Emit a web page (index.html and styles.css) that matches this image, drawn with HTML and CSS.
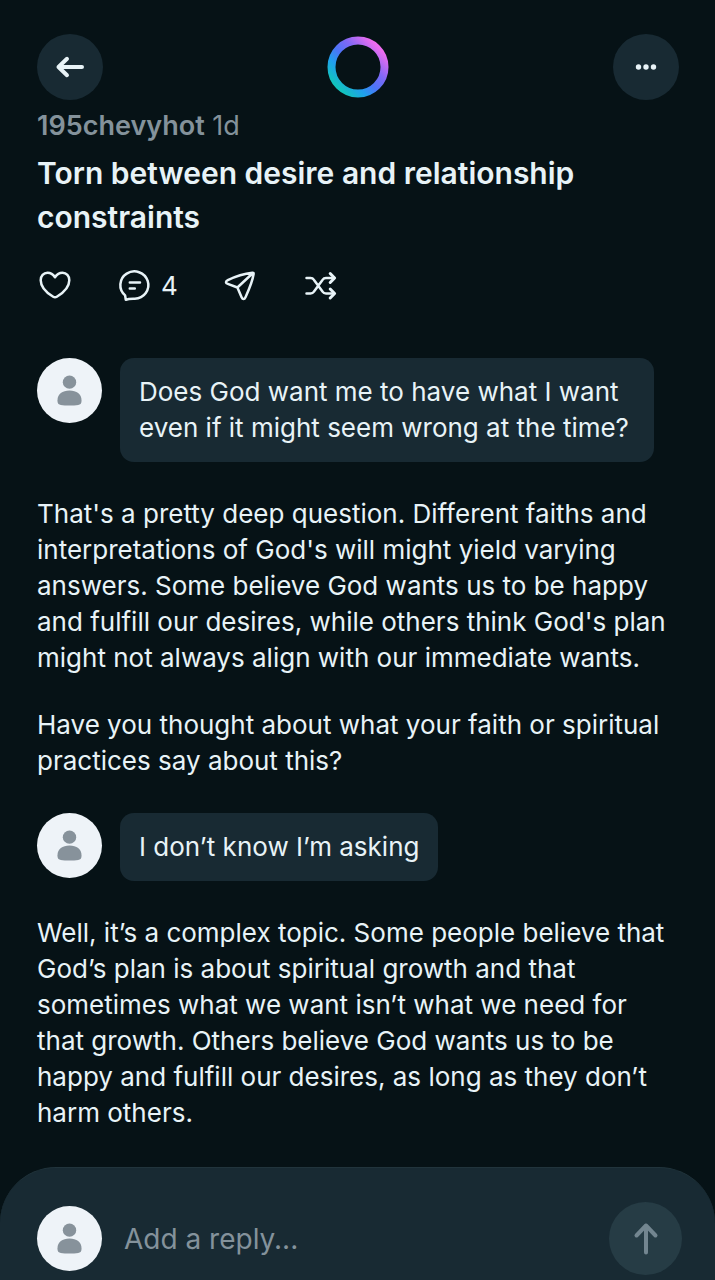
FILE: index.html
```html
<!DOCTYPE html>
<html lang="en">
  <head>
    <meta charset="UTF-8" />
    <meta name="viewport" content="width=device-width, initial-scale=1.0" />
    <title>Torn between desire and relationship constraints</title>
    <link rel="stylesheet" href="styles.css">
  </head>
  <body>
    <!-- Shared avatar picture -->
    <svg class="defs" aria-hidden="true">
      <symbol id="person" viewBox="0 0 66 66">
        <circle cx="33" cy="24.5" r="6.8" />
        <path d="M20.8 43c0-6.5 5-10 12.200-10s12.200 3.500 12.200 10c0 3.500-.8 4.200-3.200 4.600-5.200.8-12.800.8-18 0-2.400-.4-3.200-1.100-3.200-4.600z" />
      </symbol>
    </svg>

    <header class="topbar">
      <button class="round-button" aria-label="Back">
        <svg class="icon" width="32" height="32" viewBox="0 0 32 32">
          <path class="bold" d="M28 16H4.500M13 7.800L4.500 16l8.500 8.200" />
        </svg>
      </button>
      <svg class="logo" width="64" height="64" viewBox="0 0 64 64">
        <defs>
          <linearGradient id="ring" x1="0.12" y1="0.88" x2="0.88" y2="0.12">
            <stop offset="0" stop-color="#12c3bd" />
            <stop offset="0.25" stop-color="#209fee" />
            <stop offset="0.45" stop-color="#4b75f7" />
            <stop offset="0.68" stop-color="#8068f5" />
            <stop offset="1" stop-color="#ee6cf0" />
          </linearGradient>
        </defs>
        <circle cx="32" cy="32" r="26.500" fill="none" stroke="url(#ring)" stroke-width="8" />
      </svg>
      <button class="round-button" aria-label="More">
        <svg class="dots" width="32" height="32" viewBox="0 0 32 32">
          <circle cx="8.500" cy="16" r="2.700" />
          <circle cx="16" cy="16" r="2.700" />
          <circle cx="23.500" cy="16" r="2.700" />
        </svg>
      </button>
    </header>

    <main>
      <p class="byline"><strong>195chevyhot</strong> 1d</p>
      <h1>Torn between desire and relationship constraints</h1>

      <div class="actions">
        <button aria-label="Like">
          <svg class="icon" width="36" height="36" viewBox="0 0 36 36">
            <path d="M18 9.200C16 6.200 13.300 4.800 10.500 4.800 6.500 4.800 3.700 8 3.700 12.200c0 6.300 5 12 12.500 16.600 1.300.8 2.300.8 3.600 0 7.500-4.600 12.500-10.300 12.500-16.600C32.300 8 29.500 4.800 25.500 4.800 22.700 4.800 20 6.200 18 9.200z" />
          </svg>
        </button>
        <button aria-label="Comments">
          <svg class="icon" width="36" height="36" viewBox="0 0 36 36">
            <path d="M8.100 27.400A14 13.700 0 1 1 17.800 30.800c-3.300 0-6.200-.2-9 1z" />
            <path d="M12.800 14.500H23M12.800 20.500h5" />
          </svg>
          <span>4</span>
        </button>
        <button aria-label="Share">
          <svg class="icon" width="36" height="36" viewBox="0 0 36 36">
            <path d="M30.400 4.700C21 5.600 14 8 5.800 12.200c-2.500 1.300-2.400 2.900 0 3.700l9.600 3.600 4.300 10.100c.9 2 2.800 2 3.600 0C27 21.500 30.300 14.500 31.600 6c.2-1-.2-1.400-1.200-1.300zM15.400 19.500L31 5" />
          </svg>
        </button>
        <button aria-label="Remix">
          <svg class="icon" width="36" height="36" viewBox="0 0 36 36">
            <path d="M4.500 10h4c1.600 0 2.600.6 3.500 1.900l8.500 11.700c.9 1.300 1.900 1.900 3.500 1.900h8M4.500 25.500h4c1.600 0 2.600-.6 3.500-1.900l8.500-11.700c.9-1.300 1.900-1.900 3.500-1.900h8" />
            <path class="head" d="M28.200 5.500L32.600 10l-4.400 4.500M28.200 21l4.400 4.500-4.400 4.500" />
          </svg>
        </button>
      </div>

      <div class="message">
        <svg class="avatar" role="img" aria-label="User"><use href="#person" /></svg>
        <p class="bubble">Does God want me to have what I want even if it might seem wrong at the time?</p>
      </div>

      <div class="answer">
        <p>That's a pretty deep question. Different faiths and interpretations of God's will might yield varying answers. Some believe God wants us to be happy and fulfill our desires, while others think God's plan might not always align with our immediate wants.</p>
        <p>Have you thought about what your faith or spiritual practices say about this?</p>
      </div>

      <div class="message">
        <svg class="avatar" role="img" aria-label="User"><use href="#person" /></svg>
        <p class="bubble">I don’t know I’m asking</p>
      </div>

      <div class="answer">
        <p>Well, it’s a complex topic. Some people believe that God’s plan is about spiritual growth and that sometimes what we want isn’t what we need for that growth. Others believe God wants us to be happy and fulfill our desires, as long as they don’t harm others.</p>
      </div>
    </main>

    <form class="reply">
      <svg class="avatar" aria-hidden="true"><use href="#person" /></svg>
      <input type="text" aria-label="Add a reply" placeholder="Add a reply..." />
      <button type="button" class="send" aria-label="Send">
        <svg class="icon" width="36" height="36" viewBox="0 0 36 36">
          <path class="bold" d="M18 31.500V4.500M8.500 14.500l9.500-10 9.500 10" />
        </svg>
      </button>
    </form>
  </body>
</html>
```

FILE: styles.css
```css
* {
  box-sizing: border-box;
}
body {
  margin: 0;
  min-height: 100vh;
  display: flex;
  flex-direction: column;
  background: #061216;
  color: #e8f3f7;
  font-family: Inter, "Liberation Sans", sans-serif;
  font-size: 26px;
  line-height: 36px;
}
p,
h1 {
  margin: 0;
}
button {
  padding: 0;
  border: none;
  background: none;
  color: inherit;
  font: inherit;
  cursor: pointer;
}
.defs {
  position: absolute;
  width: 0;
  height: 0;
}
.icon {
  fill: none;
  stroke: currentColor;
  stroke-width: 2.5;
  stroke-linecap: round;
  stroke-linejoin: round;
}
.head {
  stroke-width: 3;
}
.bold {
  stroke-width: 4;
}
.topbar {
  display: flex;
  align-items: center;
  justify-content: space-between;
  padding: 34px 36px 8px 37px;
}
.round-button {
  display: flex;
  align-items: center;
  justify-content: center;
  width: 66px;
  height: 66px;
  border-radius: 50%;
  background: #182a33;
}
.dots {
  fill: currentColor;
}
main {
  flex: 1;
  padding: 0 36px 36px 37px;
}
.byline {
  color: #84929b;
  font-size: 27px;
}
.byline strong {
  font-weight: 600;
}
h1 {
  margin-top: 7px;
  font-size: 30px;
  font-weight: 600;
  line-height: 44px;
}
.actions {
  display: flex;
  gap: 44px;
  margin: 29px 0 54px;
}
.actions button {
  display: flex;
  align-items: center;
  gap: 8px;
  height: 36px;
}
.message {
  display: flex;
  align-items: flex-start;
  gap: 18px;
}
.avatar {
  flex: none;
  width: 65px;
  height: 65px;
  border-radius: 50%;
  background: #eef3f8;
  fill: #87929b;
}
.bubble {
  max-width: 534px;
  padding: 16px 19px;
  border-radius: 14px;
  background: #182a33;
}
.answer {
  display: flex;
  flex-direction: column;
  gap: 31px;
  padding: 34px 0;
}
.answer:last-child {
  padding-bottom: 0;
}
.reply {
  display: flex;
  align-items: center;
  gap: 22px;
  padding: 34px 33px 6px 37px;
  border-top: 1px solid #21343c;
  border-radius: 56px 56px 0 0;
  background: #182a33;
}
.reply input {
  flex: 1;
  min-width: 0;
  padding: 0;
  border: none;
  outline: none;
  background: none;
  color: inherit;
  font: inherit;
  font-size: 28px;
}
.reply input::placeholder {
  color: #84929b;
  opacity: 1;
}
.send {
  display: flex;
  align-items: center;
  justify-content: center;
  width: 73px;
  height: 73px;
  border-radius: 50%;
  background: #263c45;
  color: #738690;
}
```
